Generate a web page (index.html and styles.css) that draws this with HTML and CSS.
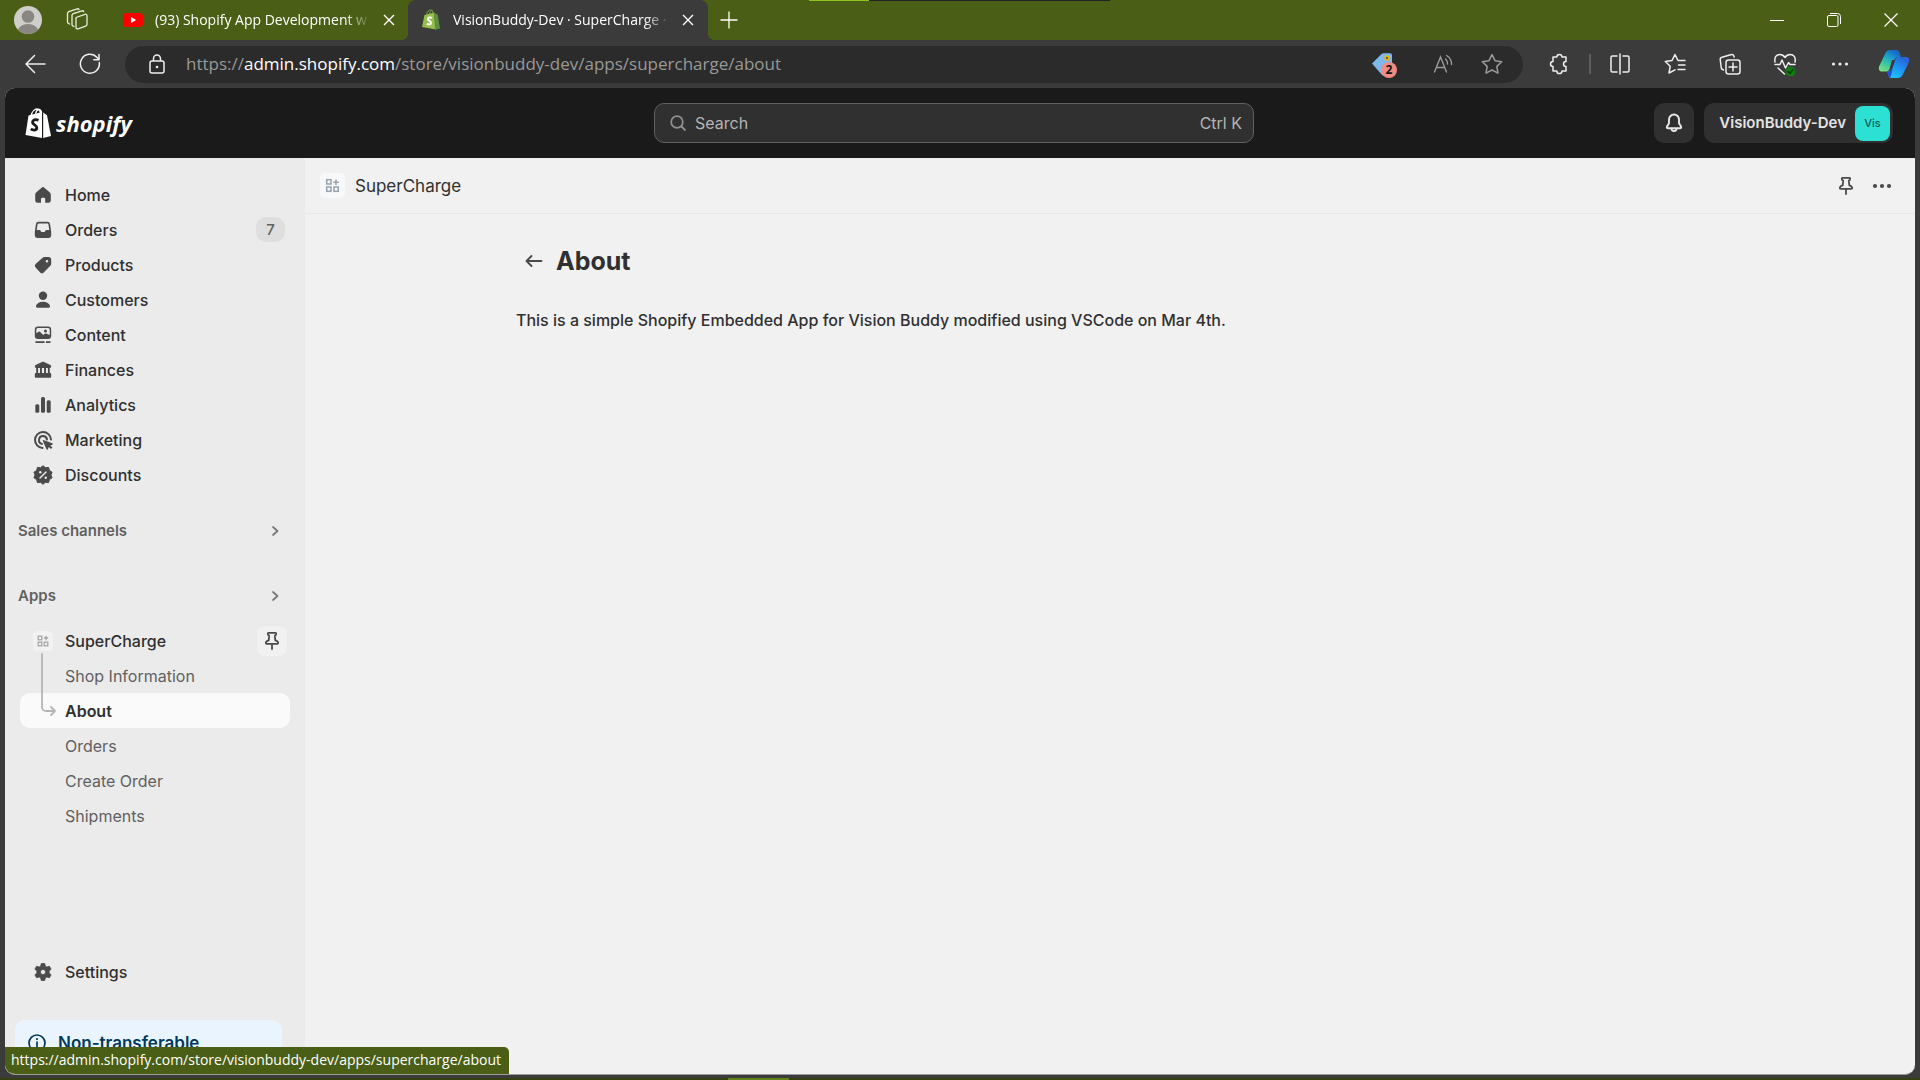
FILE: index.html
```html
<!DOCTYPE html>
<html lang="en">
<head>
<meta charset="utf-8">
<title>VisionBuddy-Dev · SuperCharge · Shopify</title>
<link rel="stylesheet" href="styles.css">
</head>
<body>
<header class="titlebar">
  <button class="profile" aria-label="Profile"><svg width="28" height="28" viewBox="0 0 28 28"><defs><clipPath id="face"><circle cx="14" cy="14" r="14"/></clipPath></defs><g clip-path="url(#face)"><rect width="28" height="28" fill="#d0cecb"/><circle cx="14" cy="10.500" r="6.300" fill="#8a8683"/><ellipse cx="14" cy="26" rx="10.500" ry="8" fill="#8a8683"/></g></svg></button>
  <button class="workspaces" aria-label="Workspaces"><svg width="24" height="24" viewBox="0 0 24 24" fill="none" stroke="#e9eedd" stroke-width="1.300" stroke-linejoin="round" stroke-linecap="round"><path d="M10 9.500l9-3.200a1.500 1.500 0 0 1 2 1.400v8.500a2 2 0 0 1-1.300 1.900l-7.700 2.700a1.500 1.500 0 0 1-2-1.400z"/><path d="M8 18.500l-1.200-.6a1.500 1.500 0 0 1-.8-1.400V7.600a2 2 0 0 1 1.300-1.900L16 2.800a1.500 1.500 0 0 1 1.700.8"/><path d="M3.500 16l-1-.6A1.500 1.500 0 0 1 1.500 14V5.500a2 2 0 0 1 1.300-1.900l8.500-2.800a1.500 1.500 0 0 1 1.700.8"/></svg></button>
  <div class="tabs">
    <div class="tab">
      <svg width="20" height="20" viewBox="0 0 20 20"><rect y="3" width="20" height="14" rx="3.500" fill="#f00"/><path d="M8 7l5.200 3L8 13z" fill="#fff"/></svg>
      <a class="tab-title" href="#tab1">(93) Shopify App Development w</a>
      <button class="tab-close" aria-label="Close tab"><svg width="12" height="12" viewBox="0 0 12 12" stroke="#fff" stroke-width="1.400"><path d="M1 1l10 10M11 1L1 11"/></svg></button>
    </div>
    <div class="tab tab-active">
      <svg width="20" height="22" viewBox="0 0 20 22"><path d="M3.500 6L13 3.500l2 17L1 18z" fill="#95bf47"/><path d="M13 3.500l3.800 2.300L19 19.500l-5 1.300z" fill="#5e8e3e"/><path d="M5.500 6C6 2.500 8 1 9.500 1s2.800 1.500 2.800 4M8.500 5.500c.3-3 1.500-4 3-4.200" stroke="#7aab3a" fill="none"/><path d="M11 9c-2-1.200-4.200-.4-4.100 1.200.1 1.700 3.200 1.700 3.100 3.700-.1 1.800-2.500 1.900-4.200.7" fill="none" stroke="#fff" stroke-width="2"/></svg>
      <a class="tab-title" href="#tab2" aria-current="page">VisionBuddy-Dev · SuperCharge ·</a>
      <button class="tab-close" aria-label="Close tab"><svg width="12" height="12" viewBox="0 0 12 12" stroke="#fff" stroke-width="1.400"><path d="M1 1l10 10M11 1L1 11"/></svg></button>
    </div>
    <button class="new-tab" aria-label="New tab"><svg width="18" height="18" viewBox="0 0 18 18" stroke="#fff" stroke-width="1.300"><path d="M9 .5v17M.5 9h17"/></svg></button>
  </div>
  <div class="window-buttons">
    <button aria-label="Minimize"><svg width="14" height="14" viewBox="0 0 14 14"><path d="M0 7.500h14" stroke="#fff"/></svg></button>
    <button aria-label="Restore"><svg width="14" height="14" viewBox="0 0 14 14" fill="none" stroke="#fff"><rect x=".5" y="2.500" width="10.500" height="11" rx="1.500"/><path d="M3 .5h7.500a3 3 0 0 1 3 3V11"/></svg></button>
    <button aria-label="Close"><svg width="14" height="14" viewBox="0 0 14 14" stroke="#fff" stroke-width="1.200"><path d="M.5.5l13 13M13.500.5l-13 13"/></svg></button>
  </div>
  <div class="edge edge-top"></div>
</header>

<nav class="toolbar" aria-label="Browser">
  <button aria-label="Back"><svg width="22" height="20" viewBox="0 0 22 20" fill="none" stroke="#eee" stroke-width="1.500" stroke-linecap="round" stroke-linejoin="round"><path d="M21 10H2M10.500 1.500L2 10l8.500 8.500"/></svg></button>
  <button aria-label="Refresh"><svg width="22" height="22" viewBox="0 0 22 22" fill="none" stroke="#eee" stroke-width="1.500" stroke-linecap="round" stroke-linejoin="round"><path d="M20.300 9.500A9.500 9.500 0 1 1 18 4.500l1.800 2M20 1.500v5.200h-5.200"/></svg></button>
  <div class="address">
    <svg width="18" height="20" viewBox="0 0 18 20" fill="none" stroke="#eee" stroke-width="1.500"><rect x="2" y="7" width="14" height="12" rx="2"/><path d="M5.500 7V4.500a3.500 3.500 0 0 1 7 0V7"/><circle cx="9" cy="13" r="1.300" fill="#eee" stroke="none"/></svg>
    <div class="url" role="textbox" aria-label="Address" contenteditable="true" spellcheck="false">https://<span class="url-host">admin.shopify.com</span>/store/visionbuddy-dev/apps/supercharge/about</div>
    <div class="address-tools">
      <button class="shopping" aria-label="Shopping, 2 offers"><svg width="26" height="26" viewBox="0 0 26 26"><path d="M1 12.500L10.500 3a3 3 0 0 1 2-.8H19a2 2 0 0 1 2 2V16l-7 7.500-2.500 1z" fill="#7fb8ea"/><circle cx="16" cy="7" r="2.700" fill="#efb211"/><circle cx="16" cy="7" r="1" fill="#443"/></svg><span class="count">2</span></button>
      <button aria-label="Read aloud"><svg width="20" height="20" viewBox="0 0 20 20" fill="none" stroke="#9a9a9a" stroke-width="1.400" stroke-linecap="round"><path d="M1.500 18L7.500 3l6 15M3.500 13.500h8M12.500 5a6 6 0 0 1 2 5M13.500 1.500a10 10 0 0 1 5 9"/></svg></button>
      <button aria-label="Favorite"><svg width="22" height="22" viewBox="0 0 22 22" fill="none" stroke="#9a9a9a" stroke-width="1.500" stroke-linejoin="round"><path d="M11 1.500l3 6.200 6.700 1-4.900 4.700 1.200 6.800-6-3.200-6 3.200 1.200-6.800-4.900-4.700 6.700-1z"/></svg></button>
    </div>
  </div>
  <div class="tools">
    <button aria-label="Extensions"><svg width="22" height="22" viewBox="0 0 22 22" fill="none" stroke="#eee" stroke-width="1.500" stroke-linejoin="round"><path d="M5 4h3.800a2.600 2.600 0 0 1 5.200 0h4v4.500a2.500 2.500 0 0 0 0 5V18h-4a2.600 2.600 0 0 1-5.200 0H5v-4.500a2.500 2.500 0 0 1 0-5z"/></svg></button>
    <span class="divider"></span>
    <button aria-label="Split screen"><svg width="22" height="22" viewBox="0 0 22 22" fill="none" stroke="#eee" stroke-width="1.500" stroke-linecap="round"><path d="M11 1v20M8 3H3.500A1.500 1.500 0 0 0 2 4.500v13A1.500 1.500 0 0 0 3.500 19H8M14 3h4.500A1.500 1.500 0 0 1 20 4.500v13a1.500 1.500 0 0 1-1.500 1.500H14"/></svg></button>
    <button aria-label="Favorites"><svg width="22" height="22" viewBox="0 0 22 22" fill="none" stroke="#eee" stroke-width="1.500" stroke-linecap="round" stroke-linejoin="round"><path d="M21 7.500h-7l-3-6-3 6-6.700 1 4.900 4.700L5 20l6-3.200M14.500 12H21M14 16.500h7"/></svg></button>
    <button aria-label="Collections"><svg width="22" height="22" viewBox="0 0 22 22" fill="none" stroke="#eee" stroke-width="1.500" stroke-linecap="round"><rect x="7" y="7" width="14" height="14" rx="2.500"/><path d="M14 10v8M10 14h8M4.500 17l-1-.5A2 2 0 0 1 2.300 15L1.200 6.500A2 2 0 0 1 3 4.300l9.500-2.800a2 2 0 0 1 2.300 1.300l.4 1.200"/></svg></button>
    <button aria-label="Browser essentials"><svg width="24" height="24" viewBox="0 0 24 24" fill="none" stroke="#eee" stroke-width="1.500" stroke-linecap="round" stroke-linejoin="round"><path d="M2 10C1 5 3.500 2.500 6.800 2.500 9 2.500 11 4 12 5.500c1-1.500 3-3 5.200-3C20.500 2.500 23 5 22 10M2 12.500h5L9 8l3.500 8 3-5.500 1.500 2h5M5 16l6.500 6"/><circle cx="17.500" cy="19.500" r="5" fill="#107c10" stroke="none"/><path d="M15 19.500l2 2 3-4" stroke="#053f05"/></svg></button>
    <button aria-label="More"><svg width="18" height="6" viewBox="0 0 18 6" fill="#eee"><circle cx="2.500" cy="3" r="1.600"/><circle cx="9" cy="3" r="1.600"/><circle cx="15.500" cy="3" r="1.600"/></svg></button>
    <button aria-label="Copilot"><svg width="32" height="30" viewBox="0 0 32 30"><defs><linearGradient id="cg1" x1="0" y1="1" x2="0.600" y2="0"><stop stop-color="#8be57c"/><stop offset=".4" stop-color="#3cc7a0"/><stop offset=".7" stop-color="#1ba0cc"/><stop offset="1" stop-color="#1668c8"/></linearGradient><linearGradient id="cg2" x1="0" y1="1" x2="0.600" y2="0"><stop stop-color="#1fd0f5"/><stop offset=".6" stop-color="#1c93f4"/><stop offset="1" stop-color="#2a64d8"/></linearGradient></defs><path d="M7.500 4A4.500 4.500 0 0 1 11.500 1H18c3 0 3.500 2 4.200 5l.8 2h-3c-2 0-3 1-3.600 3h-2.200l-2.200 8c-.8 2.500-2 3.500-4 3.500H4c-3 0-3.500-2.500-3-5z" fill="url(#cg1)"/><path d="M24.500 26a4.500 4.500 0 0 1-4 3H14c-3 0-3.500-2-4.200-5L9 22.500h1.500c2 0 3-1 3.600-3l3-8.500c.8-2.500 2-3 4-3H28c3 0 3.500 2.500 3 5z" fill="url(#cg2)"/><path d="M14.200 11h3l-3 8.500h-2.400z" fill="#3b3b3b"/><path d="M9 22.500h1c3 0 4-2 5-4l-2.500 10C10 27.500 10 25 9 22.500z" fill="#1f4fe0"/></svg></button>
  </div>
</nav>

<div class="viewport">
  <header class="app-header">
    <a class="brand" href="#home" aria-label="Shopify home"><svg width="27" height="31" viewBox="0 0 27 31"><path d="M3.500 7.500L17 4v26L.5 27z" fill="#fff"/><path d="M18.200 4.500l3.800 2.800L26 28l-7.800 2z" fill="#fff"/><path d="M6 8c1-5 4-7 6-7 2.500 0 3.500 3 3.700 6M10.500 6.500c.5-3 2-5 3.700-5s2 1.500 2.500 3.500" fill="none" stroke="#fff" stroke-width="1.300"/><path d="M13.500 12.300c-3-1.500-6-.3-6 1.900 0 2.500 4.500 2.800 4.300 5.700-.2 2.700-3.700 2.700-6 1" fill="none" stroke="#1a1a1a" stroke-width="2.800"/></svg><span>shopify</span></a>
    <label class="search"><svg width="18" height="18" viewBox="0 0 18 18" fill="none" stroke="#8f8f8f" stroke-width="1.800" stroke-linecap="round"><circle cx="8" cy="8" r="5.800"/><path d="M12.500 12.500L16 16"/></svg><input type="search" placeholder="Search" aria-label="Search"><kbd>Ctrl K</kbd></label>
    <div class="account">
      <button class="bell" aria-label="Notifications"><svg width="20" height="22" viewBox="0 0 20 22" fill="none" stroke="#e8e8e8" stroke-width="1.900" stroke-linejoin="round"><path d="M10 2.500a5 5 0 0 0-5 5v3.700L3 14.500c-.5 1 0 1.700 1 1.700h12c1 0 1.500-.7 1-1.700l-2-3.300V7.500a5 5 0 0 0-5-5z"/><path d="M7.500 16.500a2.500 2.500 0 0 0 5 0"/></svg></button>
      <button class="store">VisionBuddy-Dev<span class="avatar">Vis</span></button>
    </div>
  </header>
  <div class="workspace">
    <aside class="sidebar">
      <nav class="menu" aria-label="Main">
        <a href="#home"><svg class="icon" viewBox="0 0 20 20"><path d="M8.600 2.800a2 2 0 0 1 2.800 0l5.200 4.500A3 3 0 0 1 17.800 9.700V15.500a2.300 2.300 0 0 1-2.300 2.300h-3.300V14a1.200 1.200 0 0 0-1.200-1.200H9.200A1.200 1.200 0 0 0 8 14v3.800H4.500a2.300 2.300 0 0 1-2.300-2.300V9.700a3 3 0 0 1 1.200-2.400z"/></svg>Home</a>
        <a href="#orders"><svg class="icon" viewBox="0 0 20 20"><path fill-rule="evenodd" d="M5.500 1.800h9a2.500 2.500 0 0 1 2.500 2l1.200 8V15a3 3 0 0 1-3 3H4.800a3 3 0 0 1-3-3v-3.200L3 3.800a2.500 2.500 0 0 1 2.500-2zM5.600 3.500a1 1 0 0 0-1 .8L3.700 10h2.600c.8 0 1.200.5 1.500 1.200.2.500.5.800 1 .8h2.400c.5 0 .8-.3 1-.8.3-.7.7-1.200 1.500-1.200h2.600l-.9-5.700a1 1 0 0 0-1-.8z"/></svg>Orders<span class="badge">7</span></a>
        <a href="#products"><svg class="icon" viewBox="0 0 20 20"><path fill-rule="evenodd" d="M11.500 2H15.500A2.700 2.700 0 0 1 18.200 4.700V8.700a3 3 0 0 1-.9 2.100l-6.600 6.600a2.500 2.500 0 0 1-3.500 0L2.600 12.600a2.500 2.500 0 0 1 0-3.500L9.300 2.900A3 3 0 0 1 11.500 2zM14 7.500a1.300 1.300 0 1 0 0-2.600 1.300 1.300 0 0 0 0 2.600z"/></svg>Products</a>
        <a href="#customers"><svg class="icon" viewBox="0 0 20 20"><circle cx="10" cy="5.800" r="4.200"/><path d="M10 11.800c-3.800 0-6.400 1.800-7 4.300-.2 1 .4 1.700 1.300 1.700h11.400c.9 0 1.500-.7 1.300-1.700-.6-2.500-3.200-4.300-7-4.300z"/></svg>Customers</a>
        <a href="#content"><svg class="icon" viewBox="0 0 20 20"><path fill-rule="evenodd" d="M5 1.500h10a3.200 3.200 0 0 1 3.200 3.200v6A3.200 3.200 0 0 1 15 13.900H5a3.200 3.200 0 0 1-3.200-3.200v-6A3.200 3.200 0 0 1 5 1.500zM5 3a1.700 1.700 0 0 0-1.700 1.700v3.500l1.900-1.300a1.600 1.600 0 0 1 2 .2l3 2.900 1.500-1.200c.6-.5 1.400-.5 2 0L16.700 10V4.700A1.700 1.700 0 0 0 15 3zM12.500 7.600a1.500 1.500 0 1 0 0-3 1.500 1.500 0 0 0 0 3z"/><path d="M2.500 16.200h9v1.700h-9zM13 16.200h4.500v1.700H13z"/></svg>Content</a>
        <a href="#finances"><svg class="icon" viewBox="0 0 20 20"><path d="M9 1.900a2 2 0 0 1 2 0l6 2.800c.8.400 1.200 1 1.200 1.900 0 .8-.5 1.400-1.400 1.400H3.200c-.9 0-1.400-.6-1.400-1.400 0-.9.400-1.500 1.200-1.900zM3.200 8h1.900v5H3.200zM7 8h1.900v5H7zm4.100 0H13v5h-1.900zm3.800 0h1.900v5h-1.900zM3 13h14c.7 0 1.200.5 1.200 1.200v2.300c0 .8-.5 1.300-1.200 1.300H3c-.7 0-1.200-.5-1.200-1.300v-2.300C1.800 13.500 2.300 13 3 13z"/></svg>Finances</a>
        <a href="#analytics"><svg class="icon" viewBox="0 0 20 20"><rect x="2.300" y="9.200" width="4" height="8.600" rx="1.500"/><rect x="8" y="2" width="4" height="15.800" rx="1.500"/><rect x="13.700" y="5.200" width="4" height="12.600" rx="1.500"/></svg>Analytics</a>
        <a href="#marketing"><svg class="icon" viewBox="0 0 20 20"><g fill="none" stroke="#4a4a4a" stroke-width="2" stroke-linecap="round"><path d="M18 9.500A8 8 0 1 0 9.500 18"/><path d="M14 9.500A4 4 0 1 0 9 13.900"/></g><path d="M10.200 10l9.200 3.300c.6.200.6.900.1 1.200l-2.100 1.100 2 2-1.400 1.500-2.100-2-1.200 2.300c-.3.500-1 .5-1.200-.1L9.700 10.600z"/></svg>Marketing</a>
        <a href="#discounts"><svg class="icon" viewBox="0 0 20 20"><path d="M10 .7l2.400 2 3.200-.3.800 3.100 2.700 1.700L17.900 10l1.200 2.800-2.700 1.700-.8 3.100-3.200-.3-2.400 2-2.400-2-3.200.3-.8-3.100L.9 12.800 2.100 10 .9 7.200l2.700-1.700.8-3.100 3.200.3z" stroke="#4a4a4a" stroke-linejoin="round"/><path d="M7 13l6-6" stroke="#ebebeb" stroke-width="1.500" stroke-linecap="round"/><circle cx="7.300" cy="7.300" r="1.200" fill="#ebebeb"/><circle cx="12.700" cy="12.700" r="1.200" fill="#ebebeb"/></svg>Discounts</a>
      </nav>
      <button class="section">Sales channels<svg width="12" height="12" viewBox="0 0 12 12" fill="none" stroke="#777" stroke-width="1.700" stroke-linecap="round" stroke-linejoin="round"><path d="M4 2l4.500 4L4 10"/></svg></button>
      <button class="section section-apps">Apps<svg width="12" height="12" viewBox="0 0 12 12" fill="none" stroke="#777" stroke-width="1.700" stroke-linecap="round" stroke-linejoin="round"><path d="M4 2l4.500 4L4 10"/></svg></button>
      <nav class="menu app-menu" aria-label="Apps">
        <div class="app-row"><a href="#supercharge"><svg class="icon app-icon" viewBox="0 0 20 20" fill="none" stroke="#a6a6a6" stroke-width="1.300"><rect x="5.200" y="5.200" width="3.600" height="3.600"/><rect x="5.200" y="11.200" width="3.600" height="3.600"/><rect x="11.200" y="11.200" width="3.600" height="3.600"/><path d="M13 4.800v4.400M10.800 7h4.400"/></svg>SuperCharge</a><button class="pin" aria-label="Unpin app"><svg width="18" height="20" viewBox="0 0 18 20" fill="none" stroke="#4a4a4a" stroke-width="1.800" stroke-linecap="round" stroke-linejoin="round"><path d="M5.500 1.800h7c1 0 1 2.600-.7 2.800l.5 4.700c2 .6 2.900 1.500 2.900 2.700 0 .6-.4.900-1 .9H3.800c-.6 0-1-.3-1-.9 0-1.200.9-2.100 2.900-2.700l.5-4.700C4.500 4.400 4.500 1.800 5.500 1.800zM9 13.200V18"/></svg></button></div>
        <a class="sub" href="#shop">Shop Information</a>
        <a class="sub current" href="#about" aria-current="page">About</a>
        <a class="sub" href="#app-orders">Orders</a>
        <a class="sub" href="#create">Create Order</a>
        <a class="sub" href="#shipments">Shipments</a>
        <svg class="branch" width="18" height="66" viewBox="0 0 18 66" fill="none" stroke="#b5b5b5" stroke-width="1.800" stroke-linecap="round" stroke-linejoin="round"><path d="M2 1v53a4 4 0 0 0 4 4h8.500M11 54l4 4-4 4"/></svg>
      </nav>
      <nav class="menu settings" aria-label="Settings">
        <a href="#settings"><svg class="icon" viewBox="0 0 20 20"><path fill-rule="evenodd" d="M8.300 1.500h3.400l.6 2.600 1.500.9 2.600-.8 1.700 3-2 1.800v2l2 1.800-1.700 3-2.600-.8-1.500.9-.6 2.600H8.300l-.6-2.600-1.500-.9-2.600.8-1.700-3 2-1.800V9l-2-1.800 1.700-3 2.600.8 1.500-.9zM10 12.600a2.600 2.600 0 1 0 0-5.200 2.600 2.600 0 0 0 0 5.200z" stroke="#4a4a4a" stroke-width=".8" stroke-linejoin="round"/></svg>Settings</a>
      </nav>
      <div class="notice"><svg width="20" height="20" viewBox="0 0 20 20" fill="none" stroke="#00395c" stroke-width="1.700"><circle cx="10" cy="10" r="8"/><path d="M10 9v5.500" stroke-linecap="round"/><circle cx="10" cy="6" r="1.100" fill="#00395c" stroke="none"/></svg>Non-transferable</div>
    </aside>
    <main class="main">
      <div class="app-bar">
        <svg class="app-logo" width="25" height="25" viewBox="0 0 25 25" fill="none" stroke="#97a3ad" stroke-width="1.500"><rect x="6.700" y="6.700" width="4.300" height="4.300"/><rect x="6.700" y="14" width="4.300" height="4.300"/><rect x="14" y="14" width="4.300" height="4.300"/><path d="M16 6.500v5.500M13.200 9.200h5.600"/></svg>
        <span class="app-name">SuperCharge</span>
        <button aria-label="Pin app"><svg width="18" height="20" viewBox="0 0 18 20" fill="none" stroke="#4a4a4a" stroke-width="1.800" stroke-linecap="round" stroke-linejoin="round"><path d="M5.500 1.800h7c1 0 1 2.600-.7 2.800l.5 4.700c2 .6 2.900 1.500 2.900 2.700 0 .6-.4.900-1 .9H3.800c-.6 0-1-.3-1-.9 0-1.200.9-2.100 2.900-2.700l.5-4.700C4.500 4.400 4.500 1.800 5.500 1.800zM9 13.200V18"/></svg></button>
        <button aria-label="More actions"><svg width="20" height="6" viewBox="0 0 20 6" fill="#4a4a4a"><circle cx="3" cy="3" r="2.100"/><circle cx="10" cy="3" r="2.100"/><circle cx="17" cy="3" r="2.100"/></svg></button>
      </div>
      <div class="page">
        <div class="page-head"><a class="back" href="#back" aria-label="Back"><svg width="18" height="14" viewBox="0 0 18 14" fill="none" stroke="#4a4a4a" stroke-width="1.900" stroke-linecap="round" stroke-linejoin="round"><path d="M16.500 7H2M6.500 2l-5 5 5 5"/></svg></a><h1>About</h1></div>
        <p>This is a simple Shopify Embedded App for Vision Buddy modified using VSCode on Mar 4th.</p>
      </div>
    </main>
  </div>
  <div class="status">https://admin.shopify.com/store/visionbuddy-dev/apps/supercharge/about</div>
</div>
<div class="edge edge-bottom"></div>
</body>
</html>
```
FILE: styles.css
```css
* { box-sizing: border-box; }
body {
  margin: 0;
  height: 100vh;
  display: flex;
  flex-direction: column;
  position: relative;
  overflow: hidden;
  background: #3b3b3b;
  font: 500 16px/20px Inter, sans-serif;
  color: #303030;
}
button {
  display: flex;
  align-items: center;
  justify-content: center;
  padding: 0;
  border: 0;
  background: none;
  font: inherit;
  color: inherit;
}
a { color: inherit; text-decoration: none; }
svg { flex: none; display: block; }

/* Browser title bar */
.titlebar {
  position: relative;
  flex: none;
  display: flex;
  height: 40px;
  background: #4a5e15;
  color: #fff;
  font: 400 14px/20px "Open Sans", sans-serif;
}
.profile { width: 56px; }
.workspaces { width: 44px; }
.tabs { display: flex; flex: 1; min-width: 0; padding-left: 8px; }
.tab {
  display: flex;
  align-items: center;
  width: 300px;
  padding: 0 13px 0 15px;
  gap: 12px;
}
.tab-active {
  position: relative;
  padding: 0 14px 0 13px;
  background: #3b3b3b;
  border-radius: 8px 8px 0 0;
}
.tab-active::before, .tab-active::after {
  content: "";
  position: absolute;
  bottom: 0;
  width: 6px;
  height: 6px;
}
.tab-active::before { right: 100%; background: radial-gradient(circle at 0 0, transparent 6px, #3b3b3b 6px); }
.tab-active::after { left: 100%; background: radial-gradient(circle at 100% 0, transparent 6px, #3b3b3b 6px); }
.tab-title {
  flex: 1;
  min-width: 0;
  overflow: hidden;
  white-space: nowrap;
  mask-image: linear-gradient(to right, #000 88%, transparent);
}
.tab-close { width: 12px; height: 20px; }
.new-tab { width: 42px; }
.window-buttons { display: flex; padding-right: 1px; }
.window-buttons button { width: 57px; }
.edge { position: absolute; }
.edge-top {
  top: 0;
  left: 42.14%;
  width: 15.68%;
  height: 1px;
  background: linear-gradient(to right, #8fc31f 20%, #222 20%);
}
.edge-bottom {
  left: 0;
  right: 0;
  bottom: 0;
  height: 2px;
  background: linear-gradient(to right, #34400f 37.92%, #628519 37.92%, #628519 41.09%, #34400f 41.09%);
}

/* Browser toolbar */
.toolbar { display: flex; flex: none; align-items: center; height: 48px; padding-left: 7px; }
.toolbar > button { width: 55px; height: 40px; }
.address {
  display: flex;
  flex: 1;
  align-items: center;
  height: 37px;
  margin-left: 8px;
  padding: 0 20px 0 23px;
  gap: 20px;
  border-radius: 19px;
  background: #2b2b2b;
}
.url { flex: 1; color: #999; font: 400 17px/24px "Open Sans", sans-serif; white-space: nowrap; outline: 0; }
.url-host { color: #fff; }
.address-tools { display: flex; gap: 28px; align-items: center; }
.shopping { position: relative; margin-right: 8px; }
.count {
  position: absolute;
  right: 0;
  bottom: -1px;
  width: 16px;
  height: 16px;
  border-radius: 8px;
  background: #f28b82;
  color: #111;
  font: 700 12px/16px "Open Sans", sans-serif;
}
.tools { display: flex; align-items: center; padding-left: 8px; }
.tools button { width: 55px; height: 40px; }
.divider { width: 2px; height: 20px; margin: 0 1px 0 3px; background: #5c5c5c; }
.tools button:last-child { width: 53px; }

/* Page area inside the browser */
.viewport {
  position: relative;
  display: flex;
  flex: 1;
  flex-direction: column;
  min-height: 0;
  margin: 0 5px 5px;
  overflow: hidden;
  border-bottom: 1px solid #9a9a9a;
  border-radius: 10px;
  background: #f1f1f1;
}
.app-header {
  display: grid;
  grid-template-columns: 1fr 600px 1fr;
  flex: none;
  align-items: center;
  height: 70px;
  padding: 0 22px 0 10px;
  background: #1a1a1a;
}
.brand { display: flex; align-items: center; gap: 4px; padding-left: 10px; color: #fff; font: italic 700 22px/30px "Open Sans", sans-serif; }
.search {
  display: flex;
  align-items: center;
  height: 40px;
  padding: 0 11px 0 14px;
  gap: 8px;
  border: 1px solid #616161;
  border-radius: 10px;
  background: #303030;
  color: #b5b5b5;
}
.search input { flex: 1; min-width: 0; padding: 0; border: 0; outline: 0; background: none; font: inherit; font-weight: 400; color: inherit; }
.search input::placeholder { color: #b5b5b5; }
.search kbd { font: inherit; font-weight: 400; }
.account { display: flex; justify-content: flex-end; gap: 10px; }
.account button { height: 40px; border-radius: 10px; background: #303030; color: #e3e3e3; }
.account .bell { width: 40px; }
.account .store { padding: 0 3px 0 15px; gap: 9px; font-weight: 600; font-size: 15px; }
.avatar { width: 35px; height: 35px; border-radius: 8px; background: #2ce0d4; color: #0d5c58; font: 500 11px/35px Inter, sans-serif; }

.workspace { display: flex; flex: 1; min-height: 0; }
.sidebar {
  display: flex;
  flex: none;
  flex-direction: column;
  width: 300px;
  padding: 19px 15px 0;
  overflow: hidden;
  background: #ebebeb;
}
.menu { display: flex; flex: none; flex-direction: column; }
.menu a {
  display: flex;
  align-items: center;
  height: 35px;
  padding: 0 5px 0 13px;
  gap: 12px;
  border-radius: 10px;
}
.icon { width: 20px; height: 20px; fill: #4a4a4a; }
.badge {
  width: 29px;
  height: 25px;
  margin-left: auto;
  border-radius: 10px;
  background: #dedede;
  color: #616161;
  font-size: 15px;
  line-height: 25px;
  text-align: center;
}
.section {
  flex: none;
  justify-content: space-between;
  height: 35px;
  margin: 21px 4px 0 -2px;
  padding-right: 5px;
  color: #616161;
  font-size: 15px;
  font-weight: 600;
}
.section-apps { margin-top: 30px; }
.app-menu { position: relative; margin-top: 10px; }
.app-row { display: flex; align-items: center; height: 35px; padding-right: 3px; }
.app-row a { flex: 1; }
.app-icon { border-radius: 5px; background: #f2f2f2; fill: none; }
.pin { width: 30px; height: 30px; border-radius: 8px; background: #f1f1f1; }
.menu .sub { padding-left: 45px; color: #616161; font-weight: 400; }
.menu .current { background: #fafafa; color: #303030; font-weight: 600; }
.branch { position: absolute; left: 20px; top: 30px; }
.settings { margin-top: auto; }
.notice {
  display: flex;
  flex: none;
  height: 54px;
  margin: 31px 8px 0 -5px;
  padding: 13px 12px 0;
  gap: 11px;
  border-radius: 10px 10px 0 0;
  background: #eaf4ff;
  color: #00395c;
  font-size: 17px;
  font-weight: 600;
}

.main { flex: 1; min-width: 0; }
.app-bar {
  display: flex;
  align-items: center;
  height: 56px;
  padding: 0 15px;
  border-bottom: 1px solid #e8e8e8;
}
.app-logo { border-radius: 5px; background: #f6f8fa; }
.app-name { flex: 1; padding-left: 10px; font-size: 17px; font-weight: 400; }
.app-bar button { width: 36px; height: 35px; }
.page { max-width: 1248px; margin: 0 auto; padding: 29px 30px; }
.page-head { display: flex; align-items: center; height: 35px; }
.back { width: 40px; padding-left: 9px; }
h1 { margin: 0; font-size: 25px; line-height: 30px; font-weight: 700; }
.page p { margin: 32px 0 0; font-weight: 450; }

.status {
  position: absolute;
  left: 0;
  bottom: 0;
  height: 27px;
  padding: 0 8px 0 6px;
  border-radius: 0 5px 0 0;
  background: #4a5e15;
  color: #fff;
  font: 400 14px/26px "Open Sans", sans-serif;
}
```
